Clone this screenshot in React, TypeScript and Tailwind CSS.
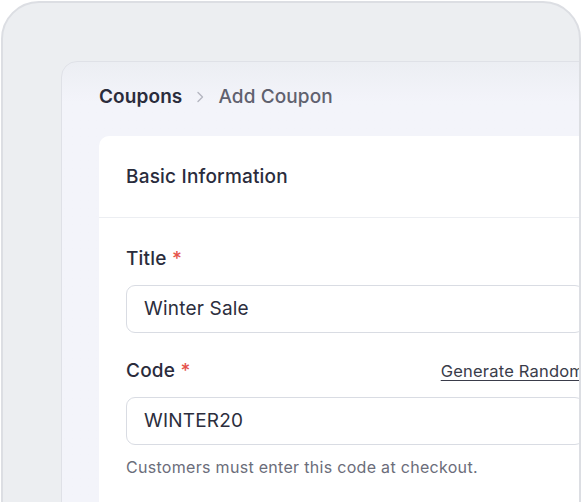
import React from "react";

export default function App() {
  return (
    <div
      className="w-[582px] h-[502px] bg-white overflow-hidden"
      style={{ fontFamily: "Inter, 'Noto Sans', sans-serif" }}
    >
      <div className="ml-[1px] mt-[1px] w-[580px] h-[560px] rounded-t-[38px] border-2 border-[#dcdee3] bg-[#eceef1] overflow-hidden pl-[58px] pt-[58px]">
        <div className="w-[620px] h-[560px] rounded-tl-[16px] border border-[#dfe1e7] bg-gradient-to-b from-[#eceef3] to-[#f3f4fa] to-[40px] pl-[37px] pt-[21px]">
          <div className="flex items-center h-[28px] text-[19px] tracking-[0.1px]">
            <span className="font-semibold text-[#2a2c3c]">Coupons</span>
            <svg
              className="ml-[12px] mr-[12px]"
              width="12"
              height="12"
              viewBox="0 0 12 12"
              fill="none"
              stroke="#b4b6c0"
              strokeWidth="1.4"
              strokeLinecap="round"
              strokeLinejoin="round"
            >
              <path d="M4 1.5 L8.5 6 L4 10.5" />
            </svg>
            <span className="font-medium text-[#5f616e]">Add Coupon</span>
          </div>

          <div className="mt-[25px] w-[520px] h-[500px] bg-white rounded-tl-[10px]">
            <div className="px-[27px] pt-[27px] pb-[26px] border-b border-[#eceef2]">
              <div className="text-[19px] tracking-[0.2px] leading-[28px] font-medium text-[#2a2c3c]">
                Basic Information
              </div>
            </div>
            <div className="px-[27px] pt-[27px] w-[512px]">
              <div className="text-[19px] tracking-[0.2px] leading-[28px] font-medium text-[#2a2c3c]">
                Title <span className="text-[#e5534b]">*</span>
              </div>
              <div className="mt-[12px] h-[48px] rounded-[9px] border border-[#d9dce3] flex items-center px-[17px] text-[19px] tracking-[0.2px] text-[#2c2e3d]">
                Winter Sale
              </div>

              <div className="mt-[24px] flex items-center justify-between h-[28px]">
                <div className="text-[19px] tracking-[0.2px] leading-[28px] font-medium text-[#2a2c3c]">
                  Code <span className="text-[#e5534b]">*</span>
                </div>
                <div className="text-[16.5px] tracking-[0.2px] text-[#3a3c4a] underline underline-offset-[3px] decoration-[1px] whitespace-nowrap">
                  Generate Random
                </div>
              </div>
              <div className="mt-[12px] h-[48px] rounded-[9px] border border-[#d9dce3] flex items-center px-[17px] text-[19px] tracking-[0.2px] text-[#2c2e3d]">
                WINTER20
              </div>
              <div className="mt-[12px] text-[16px] tracking-[0.3px] leading-[20px] text-[#6b6d7a]">
                Customers must enter this code at checkout.
              </div>
            </div>
          </div>
        </div>
      </div>
    </div>
  );
}
